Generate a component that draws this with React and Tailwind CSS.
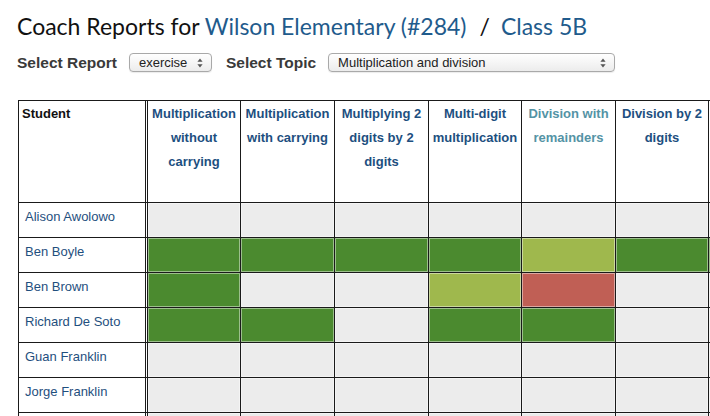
import React from "react";

const G = "bg-[#4b8a2f]";
const L = "bg-[#9fb84d]";
const R = "bg-[#c05f55]";
const E = "bg-[#ececec]";

const headers = [
  { lines: ["Multiplication", "without", "carrying"], c: "text-[#1d4f80]" },
  { lines: ["Multiplication", "with carrying"], c: "text-[#1d4f80]" },
  { lines: ["Multiplying 2", "digits by 2", "digits"], c: "text-[#1d4f80]" },
  { lines: ["Multi-digit", "multiplication"], c: "text-[#1d4f80]" },
  { lines: ["Division with", "remainders"], c: "text-[#5493a5]" },
  { lines: ["Division by 2", "digits"], c: "text-[#1d4f80]" },
  { lines: [""], c: "text-[#1d4f80]" },
];

const colW = ["w-[93px]", "w-[94px]", "w-[94px]", "w-[93px]", "w-[94px]", "w-[93px]", "w-[94px]"];

const rows = [
  { name: "Alison Awolowo", cells: [E, E, E, E, E, E, E] },
  { name: "Ben Boyle", cells: [G, G, G, G, L, G, G] },
  { name: "Ben Brown", cells: [G, E, E, L, R, E, E] },
  { name: "Richard De Soto", cells: [G, G, E, G, G, E, E] },
  { name: "Guan Franklin", cells: [E, E, E, E, E, E, E] },
  { name: "Jorge Franklin", cells: [E, E, E, E, E, E, E] },
  { name: "", cells: [E, E, E, E, E, E, E] },
];

function Arrows() {
  return (
    <svg width="6" height="10" viewBox="0 0 6 10" className="shrink-0">
      <path d="M3 0.5 L5.6 3.8 L0.4 3.8 Z" fill="#555" />
      <path d="M3 9.5 L5.6 6.2 L0.4 6.2 Z" fill="#555" />
    </svg>
  );
}

function FakeSelect({ text, w }) {
  return (
    <div
      className={`${w} h-[19px] flex items-center justify-between pl-[9px] pr-[8px] rounded-[4px] border border-[#a9a9a9] bg-gradient-to-b from-white to-[#ececec] shadow-[0_1px_1px_rgba(0,0,0,0.08)] text-[13px] font-normal text-[#222]`}
      style={{ fontFamily: '"Liberation Sans", Arial, sans-serif' }}
    >
      <span className="leading-none">{text}</span>
      <Arrows />
    </div>
  );
}

export default function App() {
  return (
    <div className="h-screen w-full overflow-hidden bg-white">
      <h1
        className="pl-[17px] pt-[11px] text-[23px] leading-[30px] font-normal text-[#111] whitespace-nowrap"
        style={{ fontFamily: 'Lato, "Open Sans", sans-serif' }}
      >
        Coach Reports for{" "}
        <span className="text-[#1f5b8c]">Wilson Elementary (#284)</span>
        <span className="ml-[13px] mr-[11px]">/</span>
        <span className="text-[#1f5b8c]">Class 5B</span>
      </h1>

      <div
        className="mt-[12px] pl-[17px] h-[19px] flex items-center text-[15.5px] font-bold text-[#3a3a3a]"
        style={{ fontFamily: '"Liberation Sans", Arial, sans-serif' }}
      >
        <span className="mr-[12px]">Select Report</span>
        <FakeSelect text="exercise" w="w-[83px]" />
        <span className="ml-[14px] mr-[12px]">Select Topic</span>
        <FakeSelect text="Multiplication and division" w="w-[287px]" />
      </div>

      <div className="mt-[28px] ml-[18px] w-[700px] overflow-hidden">
        <table
          className="w-[785px] table-fixed border-separate border-spacing-0 border-l border-t border-[#1a1a1a] text-[13px]"
          style={{ fontFamily: '"Liberation Sans", Arial, sans-serif' }}
        >
          <colgroup>
            <col className="w-[129px]" />
            {colW.map((w, i) => (
              <col key={i} className={w} />
            ))}
          </colgroup>
          <thead>
            <tr>
              <th className="h-[102px] align-top text-left font-bold text-[#111] pl-[3px] pt-[1px] leading-[24px] border-r-[3px] border-double border-b border-[#1a1a1a]">
                Student
              </th>
              {headers.map((h, i) => (
                <th
                  key={i}
                  className={`h-[102px] align-top text-center font-bold ${h.c} pt-[1px] leading-[24px] whitespace-nowrap border-r border-b border-[#1a1a1a]`}
                >
                  {h.lines.map((l, j) => (
                    <div key={j}>{l}</div>
                  ))}
                </th>
              ))}
            </tr>
          </thead>
          <tbody>
            {rows.map((r, i) => (
              <tr key={i}>
                <td className="h-[35px] align-top pl-[6px] pt-[5px] leading-[17px] text-[#1f4f7e] whitespace-nowrap border-r-[3px] border-double border-b border-[#1a1a1a]">
                  {r.name}
                </td>
                {r.cells.map((c, j) => (
                  <td
                    key={j}
                    className={`h-[35px] ${c} border-r border-b border-[#1a1a1a] shadow-[inset_0_0_0_1px_rgba(255,255,255,0.45)]`}
                  />
                ))}
              </tr>
            ))}
          </tbody>
        </table>
      </div>
    </div>
  );
}
